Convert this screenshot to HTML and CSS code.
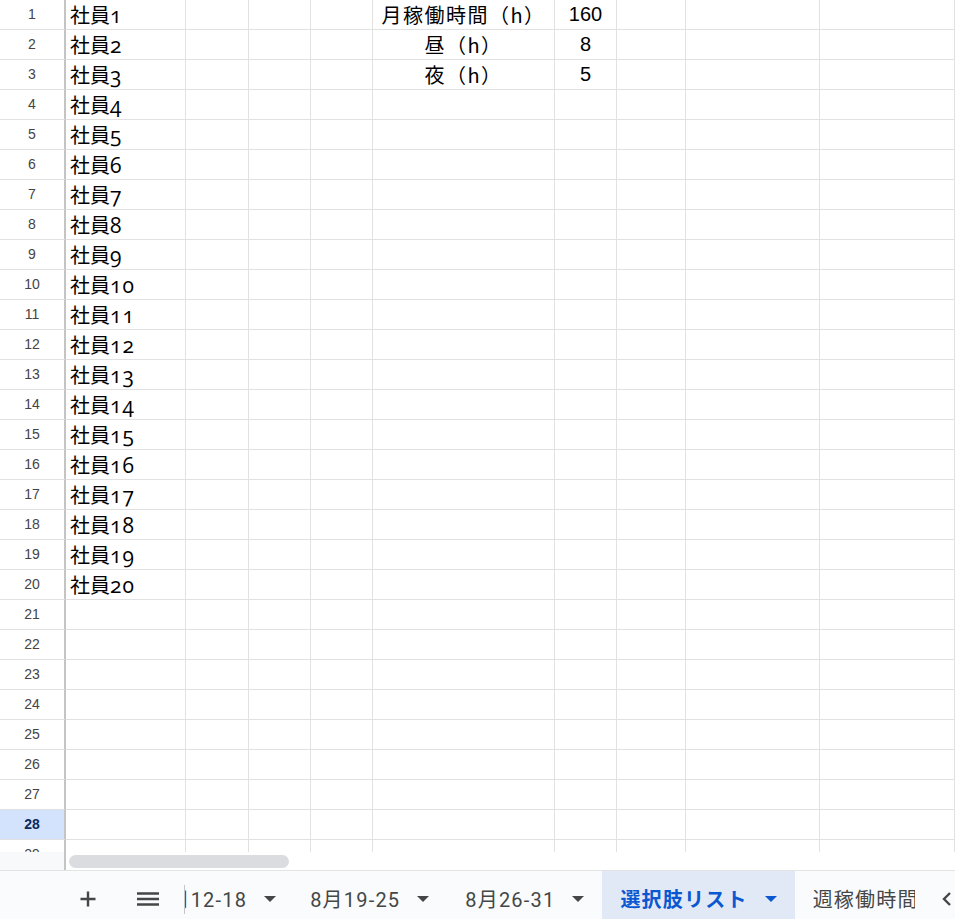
FILE: index.html
```html
<!DOCTYPE html>
<html lang="ja">
<head>
  <meta charset="UTF-8">
  <title>選択肢リスト</title>
  <link rel="stylesheet" href="styles.css">
</head>
<body>
  <div class="grid">
    <div class="row"><div class="rh">1</div><div class="c">社員<span class="n">1</span></div><div class="c"></div><div class="c"></div><div class="c"></div><div class="c mid">月稼働時間（h）</div><div class="c mid num">160</div><div class="c"></div><div class="c"></div><div class="c"></div></div>
    <div class="row"><div class="rh">2</div><div class="c">社員<span class="n">2</span></div><div class="c"></div><div class="c"></div><div class="c"></div><div class="c mid">昼（h）</div><div class="c mid num">8</div><div class="c"></div><div class="c"></div><div class="c"></div></div>
    <div class="row"><div class="rh">3</div><div class="c">社員<span class="n">3</span></div><div class="c"></div><div class="c"></div><div class="c"></div><div class="c mid">夜（h）</div><div class="c mid num">5</div><div class="c"></div><div class="c"></div><div class="c"></div></div>
    <div class="row"><div class="rh">4</div><div class="c">社員<span class="n">4</span></div><div class="c"></div><div class="c"></div><div class="c"></div><div class="c"></div><div class="c"></div><div class="c"></div><div class="c"></div><div class="c"></div></div>
    <div class="row"><div class="rh">5</div><div class="c">社員<span class="n">5</span></div><div class="c"></div><div class="c"></div><div class="c"></div><div class="c"></div><div class="c"></div><div class="c"></div><div class="c"></div><div class="c"></div></div>
    <div class="row"><div class="rh">6</div><div class="c">社員<span class="n">6</span></div><div class="c"></div><div class="c"></div><div class="c"></div><div class="c"></div><div class="c"></div><div class="c"></div><div class="c"></div><div class="c"></div></div>
    <div class="row"><div class="rh">7</div><div class="c">社員<span class="n">7</span></div><div class="c"></div><div class="c"></div><div class="c"></div><div class="c"></div><div class="c"></div><div class="c"></div><div class="c"></div><div class="c"></div></div>
    <div class="row"><div class="rh">8</div><div class="c">社員<span class="n">8</span></div><div class="c"></div><div class="c"></div><div class="c"></div><div class="c"></div><div class="c"></div><div class="c"></div><div class="c"></div><div class="c"></div></div>
    <div class="row"><div class="rh">9</div><div class="c">社員<span class="n">9</span></div><div class="c"></div><div class="c"></div><div class="c"></div><div class="c"></div><div class="c"></div><div class="c"></div><div class="c"></div><div class="c"></div></div>
    <div class="row"><div class="rh">10</div><div class="c">社員<span class="n">10</span></div><div class="c"></div><div class="c"></div><div class="c"></div><div class="c"></div><div class="c"></div><div class="c"></div><div class="c"></div><div class="c"></div></div>
    <div class="row"><div class="rh">11</div><div class="c">社員<span class="n">11</span></div><div class="c"></div><div class="c"></div><div class="c"></div><div class="c"></div><div class="c"></div><div class="c"></div><div class="c"></div><div class="c"></div></div>
    <div class="row"><div class="rh">12</div><div class="c">社員<span class="n">12</span></div><div class="c"></div><div class="c"></div><div class="c"></div><div class="c"></div><div class="c"></div><div class="c"></div><div class="c"></div><div class="c"></div></div>
    <div class="row"><div class="rh">13</div><div class="c">社員<span class="n">13</span></div><div class="c"></div><div class="c"></div><div class="c"></div><div class="c"></div><div class="c"></div><div class="c"></div><div class="c"></div><div class="c"></div></div>
    <div class="row"><div class="rh">14</div><div class="c">社員<span class="n">14</span></div><div class="c"></div><div class="c"></div><div class="c"></div><div class="c"></div><div class="c"></div><div class="c"></div><div class="c"></div><div class="c"></div></div>
    <div class="row"><div class="rh">15</div><div class="c">社員<span class="n">15</span></div><div class="c"></div><div class="c"></div><div class="c"></div><div class="c"></div><div class="c"></div><div class="c"></div><div class="c"></div><div class="c"></div></div>
    <div class="row"><div class="rh">16</div><div class="c">社員<span class="n">16</span></div><div class="c"></div><div class="c"></div><div class="c"></div><div class="c"></div><div class="c"></div><div class="c"></div><div class="c"></div><div class="c"></div></div>
    <div class="row"><div class="rh">17</div><div class="c">社員<span class="n">17</span></div><div class="c"></div><div class="c"></div><div class="c"></div><div class="c"></div><div class="c"></div><div class="c"></div><div class="c"></div><div class="c"></div></div>
    <div class="row"><div class="rh">18</div><div class="c">社員<span class="n">18</span></div><div class="c"></div><div class="c"></div><div class="c"></div><div class="c"></div><div class="c"></div><div class="c"></div><div class="c"></div><div class="c"></div></div>
    <div class="row"><div class="rh">19</div><div class="c">社員<span class="n">19</span></div><div class="c"></div><div class="c"></div><div class="c"></div><div class="c"></div><div class="c"></div><div class="c"></div><div class="c"></div><div class="c"></div></div>
    <div class="row"><div class="rh">20</div><div class="c">社員<span class="n">20</span></div><div class="c"></div><div class="c"></div><div class="c"></div><div class="c"></div><div class="c"></div><div class="c"></div><div class="c"></div><div class="c"></div></div>
    <div class="row"><div class="rh">21</div><div class="c"></div><div class="c"></div><div class="c"></div><div class="c"></div><div class="c"></div><div class="c"></div><div class="c"></div><div class="c"></div><div class="c"></div></div>
    <div class="row"><div class="rh">22</div><div class="c"></div><div class="c"></div><div class="c"></div><div class="c"></div><div class="c"></div><div class="c"></div><div class="c"></div><div class="c"></div><div class="c"></div></div>
    <div class="row"><div class="rh">23</div><div class="c"></div><div class="c"></div><div class="c"></div><div class="c"></div><div class="c"></div><div class="c"></div><div class="c"></div><div class="c"></div><div class="c"></div></div>
    <div class="row"><div class="rh">24</div><div class="c"></div><div class="c"></div><div class="c"></div><div class="c"></div><div class="c"></div><div class="c"></div><div class="c"></div><div class="c"></div><div class="c"></div></div>
    <div class="row"><div class="rh">25</div><div class="c"></div><div class="c"></div><div class="c"></div><div class="c"></div><div class="c"></div><div class="c"></div><div class="c"></div><div class="c"></div><div class="c"></div></div>
    <div class="row"><div class="rh">26</div><div class="c"></div><div class="c"></div><div class="c"></div><div class="c"></div><div class="c"></div><div class="c"></div><div class="c"></div><div class="c"></div><div class="c"></div></div>
    <div class="row"><div class="rh">27</div><div class="c"></div><div class="c"></div><div class="c"></div><div class="c"></div><div class="c"></div><div class="c"></div><div class="c"></div><div class="c"></div><div class="c"></div></div>
    <div class="row"><div class="rh sel">28</div><div class="c"></div><div class="c"></div><div class="c"></div><div class="c"></div><div class="c"></div><div class="c"></div><div class="c"></div><div class="c"></div><div class="c"></div></div>
    <div class="row"><div class="rh">29</div><div class="c"></div><div class="c"></div><div class="c"></div><div class="c"></div><div class="c"></div><div class="c"></div><div class="c"></div><div class="c"></div><div class="c"></div></div>
  </div>

  <div class="hscroll">
    <div class="corner"></div>
    <div class="track"><div class="thumb"></div></div>
  </div>

  <div class="tabbar">
    <button class="tool add" title="シートを追加">
      <svg width="18" height="18" viewBox="0 0 18 18"><path d="M9 1.5v15M1.5 9h15" stroke="#444746" stroke-width="2.4" fill="none"/></svg>
    </button>
    <button class="tool" title="すべてのシート">
      <svg width="24" height="18" viewBox="0 0 24 18"><path d="M1 3.5h22M1 9h22M1 14.5h22" stroke="#444746" stroke-width="2.4" fill="none"/></svg>
    </button>
    <div class="sep"></div>
    <div class="tabs">
      <div class="tab first">8月12-18<span class="caret"></span></div>
      <div class="tab">8月19-25<span class="caret"></span></div>
      <div class="tab">8月26-31<span class="caret"></span></div>
      <div class="tab active">選択肢リスト<span class="caret"></span></div>
      <div class="tab">週稼働時間</div>
    </div>
    <div class="nav">
      <svg width="12" height="16" viewBox="0 0 12 16"><path d="M9 2L3 8l6 6" stroke="#444746" stroke-width="2.4" fill="none"/></svg>
    </div>
  </div>
</body>
</html>
```

FILE: styles.css
```css
body {
  margin: 0;
  width: 955px;
  height: 919px;
  overflow: hidden;
  background: #fff;
  font-family: "Noto Sans CJK JP", sans-serif;
}

.grid {
  height: 852px;
  overflow: hidden;
}
.row {
  display: grid;
  grid-template-columns: 66px 120px 63px 62px 62px 182px 62px 69px 134px 1fr;
  height: 30px;
}
.rh,
.c {
  box-sizing: border-box;
  border-bottom: 1px solid #e1e1e1;
  border-right: 1px solid #e1e1e1;
  height: 30px;
  line-height: 29px;
  white-space: nowrap;
}
.rh {
  border-right: 2px solid #c4c4c4;
  text-align: center;
  font-family: "Liberation Sans", Arial, sans-serif;
  font-size: 14px;
  color: #444;
}
.rh.sel {
  background: #d3e3fd;
  color: #0b2a5b;
  font-weight: bold;
}
.c {
  padding: 0 4px;
  font-size: 20px;
  color: #000;
  overflow: visible;
}
.c.mid {
  text-align: center;
  padding: 0;
  letter-spacing: 1.5px;
}
.c.num {
  font-family: "Liberation Sans", Arial, sans-serif;
  letter-spacing: 0;
}
.n {
  font-family: "Open Sans", "Noto Sans", sans-serif;
  font-size: 21px;
  letter-spacing: 1px;
  font-variant-numeric: oldstyle-nums;
  font-feature-settings: "onum" 1;
}

.hscroll {
  display: flex;
  height: 18px;
}
.corner {
  width: 64px;
  border-right: 2px solid #c4c4c4;
  background: #f8f9fa;
}
.track {
  flex: 1;
  padding: 3px 0 0 3px;
}
.thumb {
  width: 220px;
  height: 13px;
  border-radius: 7px;
  background: #dadce0;
}

.tabbar {
  display: flex;
  height: 48px;
  border-top: 1px solid #e3e3e3;
  background: #f9fbfd;
  font-family: Roboto, "Noto Sans CJK JP", sans-serif;
  font-size: 20px;
  letter-spacing: 1.2px;
  color: #444746;
}
.tool {
  width: 60px;
  border: 0;
  background: none;
  padding: 8px 0 0;
  display: flex;
  align-items: center;
  justify-content: center;
}
.tool.add {
  margin-left: 58px;
}
.sep {
  width: 1px;
  height: 29px;
  margin: 8px 0 0 6px;
  align-self: center;
  background: #c4c7c5;
}
.tabs {
  display: flex;
  width: 730px;
  overflow: hidden;
}
.tab {
  display: flex;
  align-items: center;
  gap: 17px;
  padding: 7px 18px 0;
  white-space: nowrap;
  flex: none;
}
.tab.first {
  margin-left: -46px;
  padding-right: 16px;
}
.tab.active {
  background: #e1e9f7;
  color: #0b57d0;
  font-weight: bold;
}
.caret {
  width: 0;
  height: 0;
  border-left: 6px solid transparent;
  border-right: 6px solid transparent;
  border-top: 6px solid #444746;
}
.tab.active .caret {
  border-top-color: #0b57d0;
}
.nav {
  flex: 1;
  display: flex;
  align-items: center;
  justify-content: flex-end;
  padding: 8px 2px 0 0;
}
```
